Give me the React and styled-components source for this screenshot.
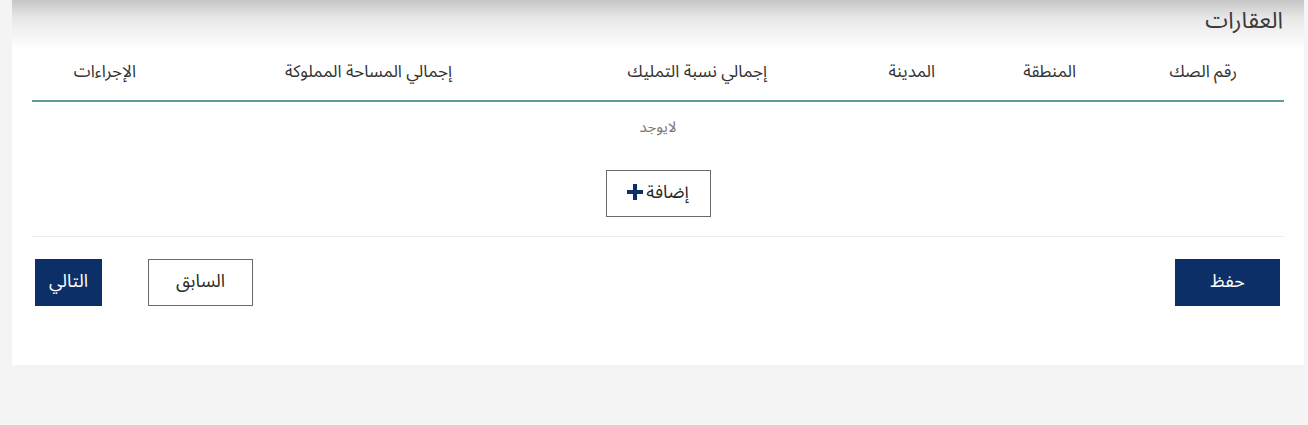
import React from 'react'
import styled, {createGlobalStyle} from 'styled-components'

const GlobalStyle = createGlobalStyle`
    html, body {
        margin: 0;
        padding: 0;
        background: #f4f4f4;
    }
    body {
        font-family: "Noto Sans Arabic", "DejaVu Sans", sans-serif;
        color: #333;
    }
`

const Page = styled.div`
    direction: rtl;
    height: 425px;
    padding: 0 4px 0 12px;
    box-sizing: border-box;
`

const Card = styled.div`
    height: 365px;
    background: linear-gradient(to bottom, #c6c6c6 0px, #e8e8e8 18px, #fff 50px);
    padding: 2px 20px 0 20px;
    box-sizing: border-box;
    display: flex;
    flex-direction: column;
`

const Title = styled.h2`
    margin: 0;
    font-size: 23px;
    font-weight: 400;
    color: #3a3a3a;
    line-height: 38px;
    padding-right: 1px;
`

const HeaderRow = styled.div`
    display: grid;
    grid-template-columns: 161px 141px 168px 315px 316px 1fr;
    margin-top: 20px;
    height: 40px;
    border-bottom: 2px solid #5b9c98;
`

const HeadCell = styled.div`
    padding-right: 47px;
    font-size: 17px;
    color: #333;
    line-height: 24px;
    white-space: nowrap;
`

const Empty = styled.div`
    text-align: center;
    font-size: 15px;
    color: #777;
    margin-top: 14px;
    line-height: 22px;
`

const AddWrap = styled.div`
    display: flex;
    justify-content: center;
    margin-top: 32px;
    padding-bottom: 19px;
    border-bottom: 1px solid #ececec;
`

const Button = styled.button`
    height: 47px;
    width: ${p => p.$w || 105}px;
    box-sizing: border-box;
    border: 1px solid ${p => p.$primary ? '#0b2f66' : '#6a6a6a'};
    background: ${p => p.$primary ? '#0b2f66' : '#fff'};
    color: ${p => p.$primary ? '#fff' : '#2a2a2a'};
    font-family: "Noto Sans Arabic", "DejaVu Sans", sans-serif;
    font-size: 18px;
    display: flex;
    align-items: center;
    justify-content: center;
    gap: 3px;
    padding: 0 0 3px;
    cursor: pointer;
`

const Footer = styled.div`
    display: flex;
    justify-content: space-between;
    align-items: center;
    padding: 22px 4px 0 3px;
`

const NavGroup = styled.div`
    display: flex;
    gap: 46px;
`

const columns = ['رقم الصك', 'المنطقة', 'المدينة', 'إجمالي نسبة التمليك', 'إجمالي المساحة المملوكة', 'الإجراءات']

const Plus = () => (
    <svg width="16" height="16" viewBox="0 0 15 15">
        <path d="M5.6 0h3.8v5.6H15v3.8H9.4V15H5.6V9.4H0V5.6h5.6z" fill="#0b2f66" />
    </svg>
)

export default function App(){
    return (
        <Page>
            <GlobalStyle />
            <Card>
                <Title>العقارات</Title>
                <HeaderRow>
                    {columns.map(c => <HeadCell key={c}>{c}</HeadCell>)}
                </HeaderRow>
                <Empty>لايوجد</Empty>
                <AddWrap>
                    <Button>إضافة<Plus /></Button>
                </AddWrap>
                <Footer>
                    <Button $primary>حفظ</Button>
                    <NavGroup>
                        <Button>السابق</Button>
                        <Button $primary $w={67}>التالي</Button>
                    </NavGroup>
                </Footer>
            </Card>
        </Page>
    )
}
